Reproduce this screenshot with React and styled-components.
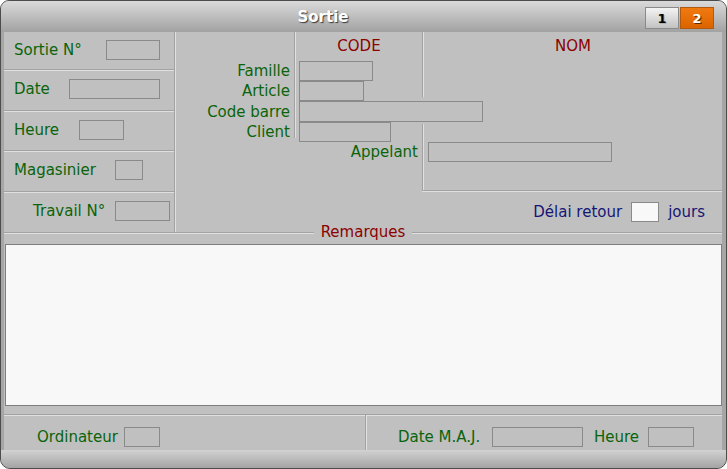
import React from "react";
import styled, { createGlobalStyle, css } from "styled-components";

const GlobalStyle = createGlobalStyle`
  html, body { margin: 0; padding: 0; background: #fff; }
  body { font-family: "DejaVu Sans", Verdana, sans-serif; font-size: 15px; }
  * { box-sizing: border-box; }
`;

const DARK = "#a2a2a2";
const LIGHT = "#e0e0e0";

const etchBottom = css`
  border-bottom: 1px solid ${DARK};
  box-shadow: 0 1px 0 ${LIGHT};
`;

const Window = styled.div`
  width: 727px;
  height: 469px;
  border: 1px solid #4c4c4c;
  border-radius: 9px 9px 10px 10px;
  overflow: hidden;
  display: flex;
  flex-direction: column;
  background: #a6a6a6;
`;

const TitleBar = styled.div`
  height: 31px;
  flex: 0 0 31px;
  display: flex;
  align-items: center;
  padding-right: 12px;
  background: linear-gradient(#dadada, #a2a2a2);
`;

const Title = styled.div`
  flex: 1;
  text-align: center;
  color: #fff;
  font-weight: bold;
  font-size: 15px;
  text-shadow: 1px 1px 1px #3a3a3a;
`;

const PageTabs = styled.div`
  display: flex;
  gap: 1px;
  margin-top: 3px;
`;

const PageTab = styled.div`
  width: 34px;
  height: 22px;
  display: flex;
  align-items: center;
  justify-content: center;
  font-size: 13px;
  font-weight: bold;
  border: 1px solid ${(p) => (p.$active ? "#b05a10" : "#8a8a8a")};
  color: ${(p) => (p.$active ? "#fff" : "#000")};
  background: ${(p) =>
    p.$active
      ? "linear-gradient(#f07a10, #dc6400)"
      : "linear-gradient(#f4f4f4, #c2c2c2)"};
  text-shadow: ${(p) => (p.$active ? "1px 1px 0 #5a2a00" : "1px 1px 0 #b0b0b0")};
`;

const Body = styled.div`
  flex: 1;
  margin: 0 4px 0 3px;
  background: #c0c0c0;
  display: flex;
  flex-direction: column;
`;

const Footer = styled.div`
  height: 18px;
  flex: 0 0 18px;
  background: linear-gradient(#d2d2d2, #a4a4a4);
`;

const Top = styled.div`
  height: 200px;
  flex: 0 0 200px;
  display: flex;
`;

const LeftPanel = styled.div`
  width: 171px;
  flex: 0 0 171px;
  display: flex;
  flex-direction: column;
  border-right: 1px solid ${DARK};
  box-shadow: 1px 0 0 ${LIGHT};
`;

const Row = styled.div`
  height: ${(p) => p.$h}px;
  flex: 0 0 ${(p) => p.$h}px;
  display: flex;
  align-items: center;
  padding-left: ${(p) => p.$pad || 10}px;
  padding-bottom: 2px;
  ${(p) => !p.$last && etchBottom}
`;

const Label = styled.span`
  color: #0a640a;
  white-space: nowrap;
  width: ${(p) => (p.$w ? `${p.$w}px` : "auto")};
  margin-left: ${(p) => p.$ml || 0}px;
  flex: 0 0 auto;
`;

const Input = styled.div`
  width: ${(p) => p.$w}px;
  height: ${(p) => p.$h || 20}px;
  flex: 0 0 auto;
  border: 1px solid #8a8a8a;
  background: ${(p) => (p.$white ? "#f8f8f8" : "transparent")};
`;

const Middle = styled.div`
  flex: 1;
  display: grid;
  grid-template-columns: 119px 2px 126px 2px 1fr;
  grid-template-rows: 29px 20px 20px 21px 20px 20px 30px 40px;
`;

const ColHead = styled.div`
  grid-column: ${(p) => p.$col};
  grid-row: 1;
  display: flex;
  align-items: center;
  justify-content: center;
  padding-bottom: 2px;
  color: #8c0000;
`;

const Cell = styled.div`
  grid-column: ${(p) => p.$col};
  grid-row: ${(p) => p.$row};
  display: flex;
  align-items: center;
  justify-content: ${(p) => (p.$right ? "flex-end" : "flex-start")};
  padding-right: ${(p) => (p.$right ? 4 : 0)}px;
  padding-left: ${(p) => p.$indent || 0}px;
  color: #0a640a;
  white-space: nowrap;
`;

const VLine = styled.div`
  grid-column: ${(p) => p.$col};
  grid-row: ${(p) => p.$rows};
  margin: ${(p) => p.$mt || 0}px 0 ${(p) => p.$mb || 0}px;
  background: linear-gradient(to right, ${DARK} 50%, ${LIGHT} 50%);
`;

const HLine = styled.div`
  grid-column: 4 / 6;
  grid-row: 7;
  align-self: end;
  height: 2px;
  background: linear-gradient(${DARK} 50%, ${LIGHT} 50%);
`;

const DelayRow = styled.div`
  grid-column: 1 / 6;
  grid-row: 8;
  display: flex;
  align-items: center;
  justify-content: flex-end;
  gap: 9px;
  padding-right: 17px;
  color: #161676;
`;

const RemarksHead = styled.div`
  margin-top: -8px;
  height: 17px;
  flex: 0 0 17px;
  display: flex;
  align-items: center;
`;

const Rule = styled.div`
  flex: 1;
  height: 2px;
  background: linear-gradient(${DARK} 50%, ${LIGHT} 50%);
`;

const Legend = styled.span`
  color: #8c0000;
  padding: 0 7px 2px;
`;

const RemarksBox = styled.div`
  flex: 1;
  margin: 3px 0 0 1px;
  background: #f8f8f8;
  border: 1px solid #7e7e7e;
`;

const Bottom = styled.div`
  margin-top: 8px;
  height: 36px;
  flex: 0 0 36px;
  display: grid;
  grid-template-columns: 362px 1fr;
  border-top: 1px solid ${DARK};
  box-shadow: inset 0 1px 0 ${LIGHT};
`;

const BottomCell = styled.div`
  display: flex;
  align-items: center;
  padding: 8px 0 0 ${(p) => p.$pad}px;
  ${(p) =>
    p.$sep &&
    css`
      border-right: 1px solid ${DARK};
      box-shadow: 1px 0 0 ${LIGHT};
    `}
`;

const leftRows = [
  { label: "Sortie N°", h: 38, w: 92, input: 54 },
  { label: "Date", h: 41, w: 55, input: 91 },
  { label: "Heure", h: 40, w: 65, input: 45 },
  { label: "Magasinier", h: 41, w: 101, input: 28 },
  { label: "Travail N°", h: 40, w: 82, input: 55, pad: 29, last: true },
];

export default function App() {
  return (
    <>
      <GlobalStyle />
      <Window>
        <TitleBar>
          <Title>Sortie</Title>
          <PageTabs>
            <PageTab>1</PageTab>
            <PageTab $active>2</PageTab>
          </PageTabs>
        </TitleBar>

        <Body>
          <Top>
            <LeftPanel>
              {leftRows.map((r) => (
                <Row key={r.label} $h={r.h} $pad={r.pad} $last={r.last}>
                  <Label $w={r.w}>{r.label}</Label>
                  <Input $w={r.input} />
                </Row>
              ))}
            </LeftPanel>

            <Middle>
              <ColHead $col={3}>CODE</ColHead>
              <ColHead $col={5}>NOM</ColHead>

              <VLine $col={2} $rows="1 / 6" $mb={4} />
              <VLine $col={4} $rows="1 / 4" $mb={4} />
              <VLine $col={4} $rows="5 / 8" $mt={2} />
              <HLine />

              <Cell $col={1} $row={2} $right>Famille</Cell>
              <Cell $col={3} $row={2} $indent={3}><Input $w={74} /></Cell>
              <Cell $col={1} $row={3} $right>Article</Cell>
              <Cell $col={3} $row={3} $indent={3}><Input $w={65} /></Cell>
              <Cell $col={1} $row={4} $right>Code barre</Cell>
              <Cell $col="3 / 6" $row={4} $indent={3}><Input $w={184} $h={21} /></Cell>
              <Cell $col={1} $row={5} $right>Client</Cell>
              <Cell $col={3} $row={5} $indent={3}><Input $w={92} /></Cell>
              <Cell $col="1 / 4" $row={6} $right>Appelant</Cell>
              <Cell $col={5} $row={6} $indent={4}><Input $w={184} /></Cell>

              <DelayRow>
                <span>Délai retour</span>
                <Input $w={28} $white />
                <span>jours</span>
              </DelayRow>
            </Middle>
          </Top>

          <RemarksHead>
            <Rule />
            <Legend>Remarques</Legend>
            <Rule />
          </RemarksHead>
          <RemarksBox />

          <Bottom>
            <BottomCell $pad={33} $sep>
              <Label $w={87}>Ordinateur</Label>
              <Input $w={36} />
            </BottomCell>
            <BottomCell $pad={32}>
              <Label $w={94}>Date M.A.J.</Label>
              <Input $w={91} />
              <Label $w={54} $ml={11}>Heure</Label>
              <Input $w={46} />
            </BottomCell>
          </Bottom>
        </Body>
        <Footer />
      </Window>
    </>
  );
}
